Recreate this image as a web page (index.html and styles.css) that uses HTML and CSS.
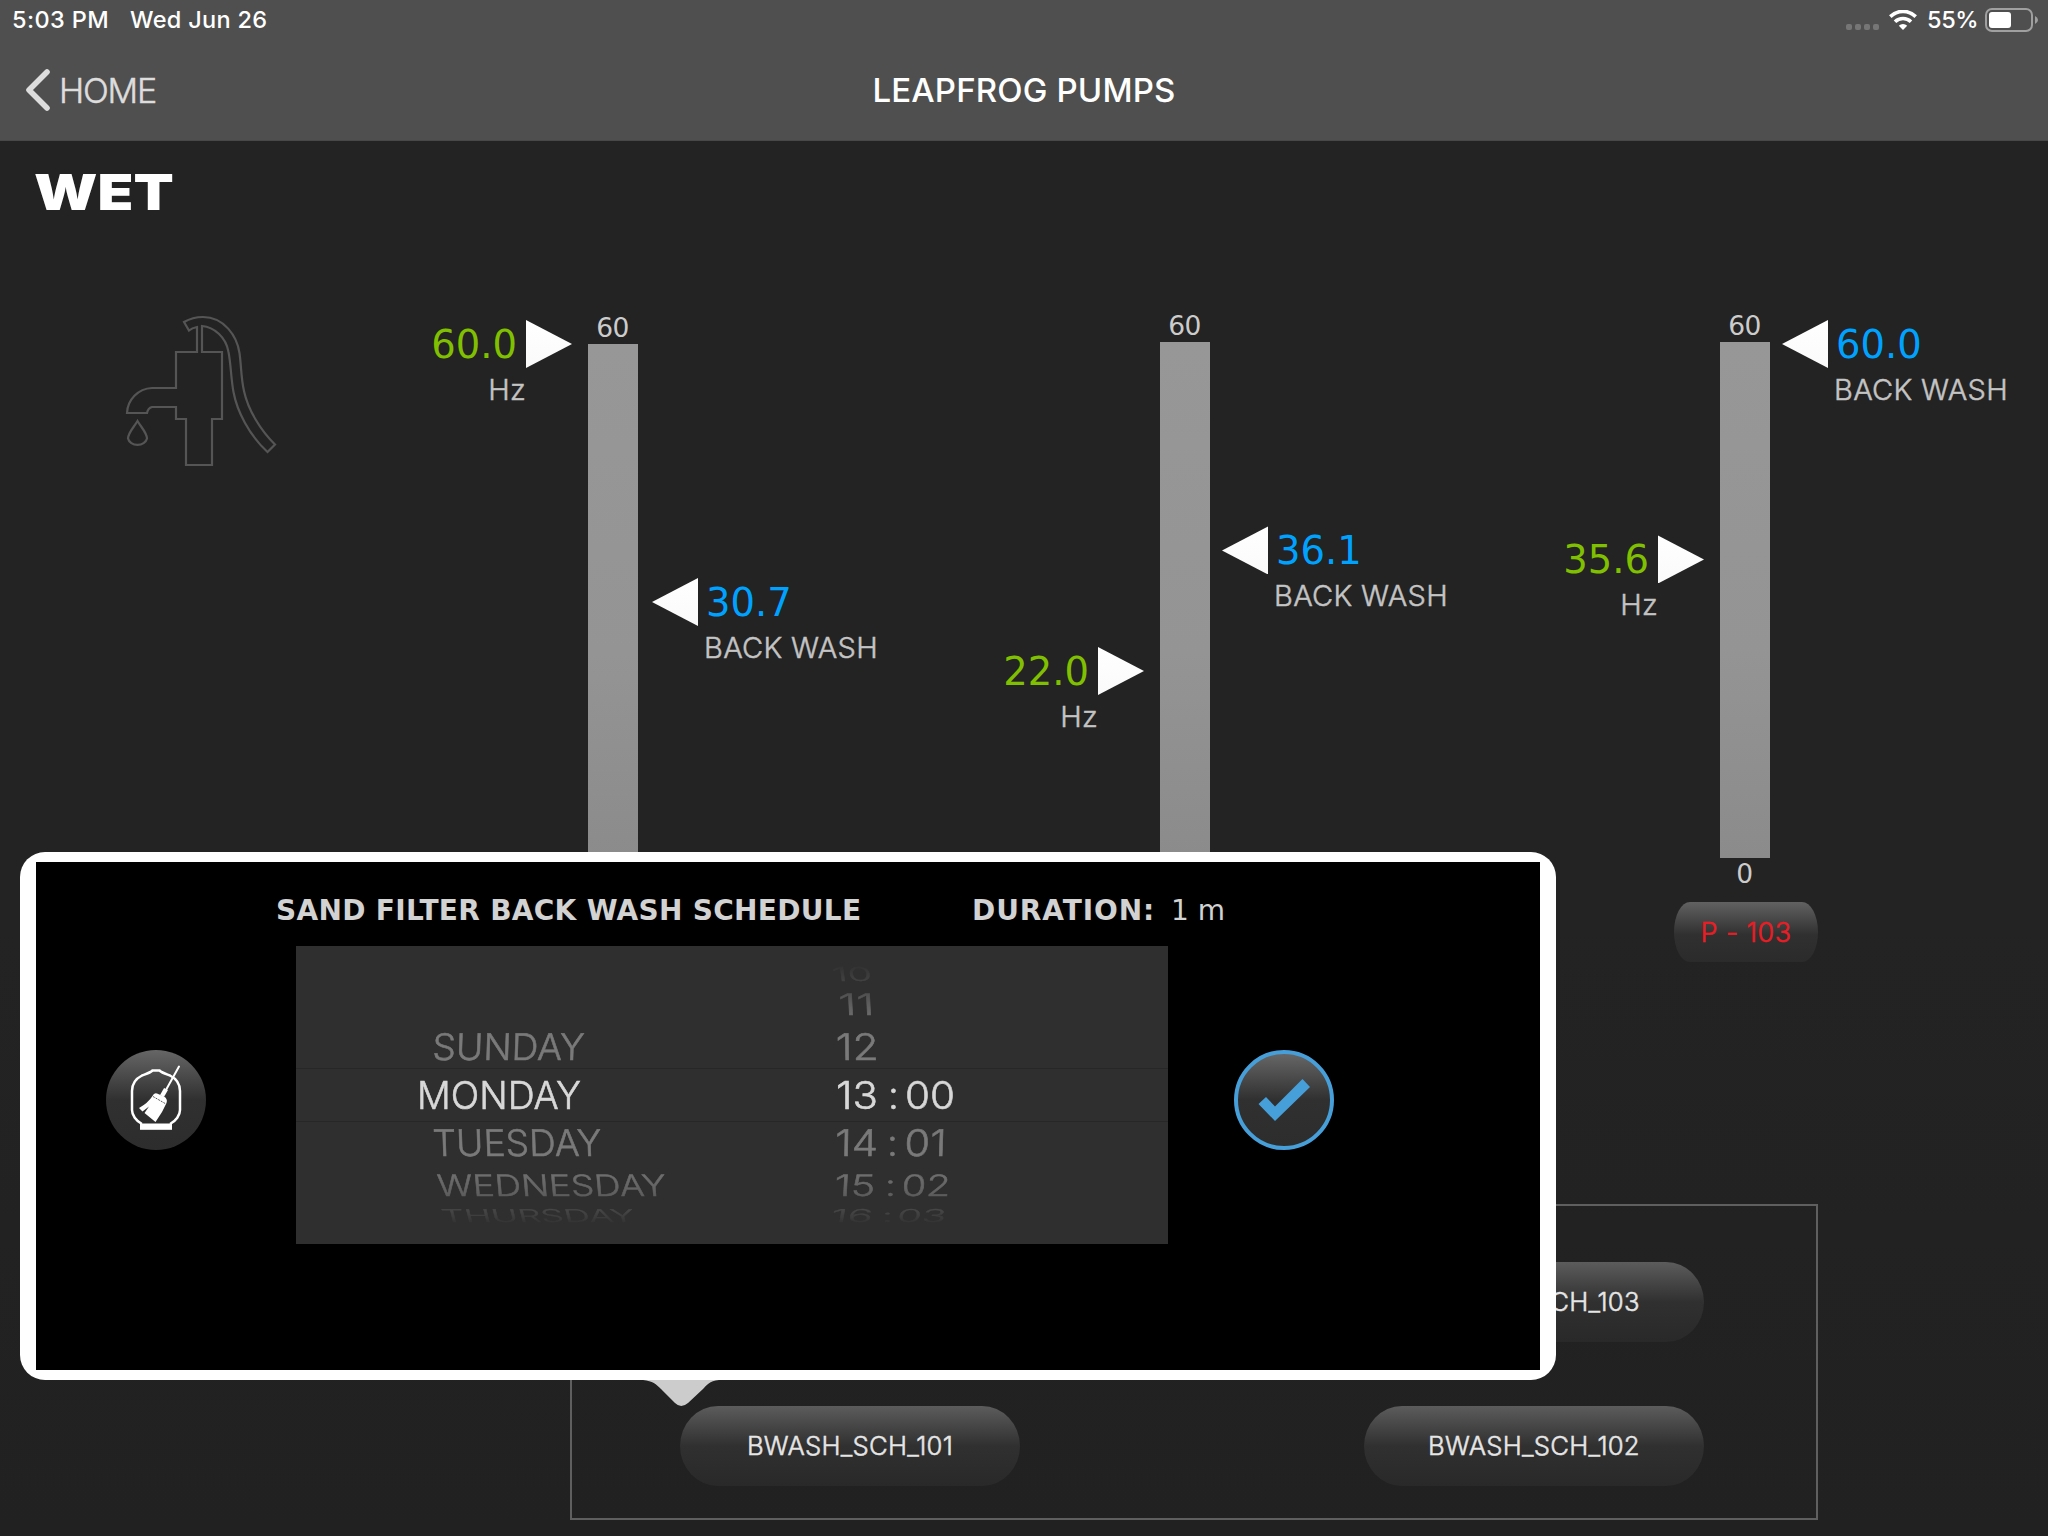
FILE: index.html
```
<!DOCTYPE html>
<html lang="en">
<head>
<meta charset="utf-8">
<title>Leapfrog Pumps</title>
<link rel="stylesheet" href="styles.css">
</head>
<body>
<div class="screen">
  <header class="topbar">
    <div class="status">
      <span class="status-time">5:03 PM</span>
      <span class="status-date">Wed Jun 26</span>
      <div class="status-right">
        <span class="signal"><i></i><i></i><i></i><i></i></span>
        <svg class="wifi" viewBox="0 0 28 20" width="28" height="20">
          <g fill="none" stroke="#fff" stroke-width="3.6">
            <path d="M1.3 6.6A18 18 0 0 1 26.700 6.600"/>
            <path d="M6 11.700A11.500 11.500 0 0 1 22 11.700"/>
          </g>
          <path d="M14 20L9.800 15.800A6 6 0 0 1 18.200 15.800Z" fill="#fff"/>
        </svg>
        <span class="percent">55%</span>
        <svg class="battery" viewBox="0 0 54 24" width="54" height="24">
          <rect x="1" y="1" width="46" height="22" rx="6" fill="none" stroke="#a0a0a0" stroke-width="2"/>
          <rect x="4" y="4" width="22" height="16" rx="3" fill="#fff"/>
          <path d="M50 8Q53 9.500 53 12T50 16Z" fill="#a0a0a0"/>
        </svg>
      </div>
    </div>
    <nav class="nav">
      <a class="back">
        <svg viewBox="0 0 26 44" width="26" height="44"><path d="M22 4L4 22L22 40" fill="none" stroke="#ddd" stroke-width="5.600" stroke-linecap="round" stroke-linejoin="round"/></svg>
        <span>HOME</span>
      </a>
      <h1 class="title">LEAPFROG PUMPS</h1>
    </nav>
  </header>

  <main class="main">
    <div class="brand"><span>WET</span></div>

    <section class="pumps">
      <svg class="faucet" viewBox="0 0 200 200" width="200" height="200">
        <g fill="none" stroke="#555" stroke-width="2.200">
          <path d="M84 32C90 28.500 97 27 103 27C124 27 137 46 139.500 63C141.500 78 141 88 144 101C148 120 161 141 175 154.500L167.500 162C149 145 137 121 133.500 102C131 89 131 75 128.500 62C126 47 114 37 102 36V62H122V129H112V175H86V129H76V117H52Q48 118 47 123H27C27.500 110 38 98.500 52 98H76V62H97V37Q92 38 89 40.500Z"/>
          <path d="M37.500 131C34 137 28 143 28 148.500A9.700 8 0 0 0 47 148.500C47 143 41 137 37.500 131Z"/>
        </g>
      </svg>

      <div class="gauge gauge-first">
        <span class="scale">60</span>
        <div class="bar">
          <div class="marker marker-left" style="top:0%"><div class="line"><span class="value">60.0</span><i class="arrow"></i></div><span class="unit">Hz</span></div>
          <div class="marker marker-right" style="top:50%"><div class="line"><i class="arrow"></i><span class="value">30.7</span></div><span class="unit">BACK WASH</span></div>
        </div>
      </div>
      <div class="gauge">
        <span class="scale">60</span>
        <div class="bar">
          <div class="marker marker-left" style="top:63.760%"><div class="line"><span class="value">22.0</span><i class="arrow"></i></div><span class="unit">Hz</span></div>
          <div class="marker marker-right" style="top:40.400%"><div class="line"><i class="arrow"></i><span class="value">36.1</span></div><span class="unit">BACK WASH</span></div>
        </div>
      </div>
      <div class="gauge">
        <span class="scale">60</span>
        <div class="bar">
          <div class="marker marker-left" style="top:42.150%"><div class="line"><span class="value">35.6</span><i class="arrow"></i></div><span class="unit">Hz</span></div>
          <div class="marker marker-right" style="top:0.390%"><div class="line"><i class="arrow"></i><span class="value">60.0</span></div><span class="unit">BACK WASH</span></div>
        </div>
        <span class="scale scale-low">0</span>
        <button class="pump">P - 103</button>
      </div>
    </section>

    <section class="schedules">
      <button class="pill pill-103">BWASH_SCH_103</button>
      <button class="pill pill-101">BWASH_SCH_101</button>
      <button class="pill pill-102">BWASH_SCH_102</button>
    </section>
  </main>

  <div class="popover">
    <div class="panel">
      <button class="round">
        <svg viewBox="0 0 100 100" width="100" height="100">
          <path d="M36 74C30 71 26 65 26 60V41C26 32 31 28 36 25.500C40 24 44 23 46.500 20.500H53.500C56 23 60 24 64 25.500C69 28 74 32 74 41V60C74 65 70 71 64 74" fill="none" stroke="#fff" stroke-width="2.500"/>
          <rect x="34" y="73.500" width="32" height="6.300" fill="#fff"/>
          <path d="M73 16.500L60.500 39" stroke="#fff" stroke-width="2" stroke-linecap="round"/>
          <path d="M60 39L56 46" stroke="#fff" stroke-width="4.500"/>
          <path d="M46.500 46Q48 42.500 51 43.500L58 46.500Q62 49 60.500 53L56 62L49.500 72L38.500 63L43 56.500L36.500 61.500L33 58Q42 53 46.500 46Z" fill="#fff"/>
          <path d="M47 46.500L60 54" stroke="#333" stroke-width=".8" stroke-dasharray="2 1"/>
        </svg>
      </button>
      <div class="schedule">
        <div class="heading">
          <h2 class="heading-title">SAND FILTER BACK WASH SCHEDULE</h2>
          <span class="heading-duration">DURATION:</span>
          <span class="heading-value">1 m</span>
        </div>
        <svg class="picker" viewBox="296 946 872 298" width="872" height="298">
          <defs>
            <mask id="wheel" maskUnits="userSpaceOnUse" x="296" y="946" width="872" height="298"><rect x="296" y="946" width="872" height="298" fill="url(#fade)"/></mask>
            <linearGradient id="fade" gradientUnits="userSpaceOnUse" x1="0" y1="946" x2="0" y2="1244">
              <stop offset=".06" stop-color="#fff" stop-opacity=".02"/>
              <stop offset=".13" stop-color="#fff" stop-opacity=".3"/>
              <stop offset=".22" stop-color="#fff" stop-opacity=".75"/>
              <stop offset=".3" stop-color="#fff"/>
              <stop offset=".72" stop-color="#fff"/>
              <stop offset=".83" stop-color="#fff" stop-opacity=".65"/>
              <stop offset=".88" stop-color="#fff" stop-opacity=".35"/>
              <stop offset=".935" stop-color="#fff" stop-opacity=".03"/>
            </linearGradient>
          </defs>
          <path class="rule" d="M296 1068.500H1168M296 1121.500H1168"/>
          <g class="wheel" mask="url(#wheel)">
            <text transform="translate(432 1060) skewX(-2) scale(1 .95)" textLength="152" lengthAdjust="spacingAndGlyphs">SUNDAY</text>
            <text transform="translate(433 1156) skewX(2) scale(1 .95)" textLength="169" lengthAdjust="spacingAndGlyphs">TUESDAY</text>
            <text transform="translate(438 1196) skewX(5) scale(1 .77)" textLength="229" lengthAdjust="spacingAndGlyphs">WEDNESDAY</text>
            <text transform="translate(443 1222) skewX(14) scale(1 .46)" textLength="193" lengthAdjust="spacingAndGlyphs">THURSDAY</text>

            <text transform="translate(833 981) skewX(8) scale(1 .5)" textLength="40" lengthAdjust="spacingAndGlyphs">10</text>
            <text transform="translate(839 1015) skewX(3) scale(1 .77)" textLength="36" lengthAdjust="spacingAndGlyphs">11</text>
            <text transform="translate(836 1060) skewX(1) scale(1 .95)" textLength="43" lengthAdjust="spacingAndGlyphs">12</text>
            <text transform="translate(835 1156) skewX(-1) scale(1 .95)" textLength="43" lengthAdjust="spacingAndGlyphs">14</text>
            <text transform="translate(834 1196) skewX(-3) scale(1 .77)" textLength="41" lengthAdjust="spacingAndGlyphs">15</text>
            <text transform="translate(830 1222) skewX(-10) scale(1 .46)" textLength="42" lengthAdjust="spacingAndGlyphs">16</text>
            <text transform="translate(887 1156) scale(1 .95)">:</text>
            <text transform="translate(885 1196) scale(1 .77)">:</text>
            <text transform="translate(882 1222) scale(1 .46)">:</text>
            <text transform="translate(904 1156) skewX(-2) scale(1 .95)" textLength="42" lengthAdjust="spacingAndGlyphs">01</text>
            <text transform="translate(901 1196) skewX(-4) scale(1 .77)" textLength="49" lengthAdjust="spacingAndGlyphs">02</text>
            <text transform="translate(896 1222) skewX(-12) scale(1 .46)" textLength="49" lengthAdjust="spacingAndGlyphs">03</text>
          </g>
          <g class="chosen">
            <text x="417" y="1109" textLength="164" lengthAdjust="spacingAndGlyphs">MONDAY</text>
            <text x="836" y="1109" textLength="42" lengthAdjust="spacingAndGlyphs">13</text>
            <text x="888" y="1109">:</text>
            <text x="905" y="1109" textLength="50" lengthAdjust="spacingAndGlyphs">00</text>
          </g>
        </svg>
      </div>
      <button class="round round-check">
        <svg viewBox="0 0 100 100" width="100" height="100"><path d="M24.500 54L32 47L41 56.500L68.500 29L76 37L41 71Z" fill="#479fd9"/></svg>
      </button>
    </div>
    <svg class="tail" viewBox="0 0 76 26" width="76" height="26"><path d="M0 0H76C66 1 64 5 60 9L45 23Q38 29 32 23L18 9C13 4 10 1 0 0Z" fill="#ccc"/></svg>
  </div>
</div>
</body>
</html>
```
FILE: styles.css
```
* { box-sizing: border-box; }
body { margin: 0; background: #222; }
button { border: 0; padding: 0; margin: 0; color: inherit; font: inherit; }
h1, h2 { margin: 0; }
svg { display: block; flex: none; }

.screen {
  position: relative;
  display: flex;
  flex-direction: column;
  width: 2048px;
  height: 1536px;
  overflow: hidden;
  background: linear-gradient(#232323 60%, #212121);
  font-family: Inter, "Liberation Sans", sans-serif;
  color: #e6e6e6;
}

/* Light text is thickened slightly to sit between the light and regular weights */
.back, .unit, .pump, .pill { font-weight: 300; -webkit-text-stroke: .5px currentColor; }

.topbar { height: 141px; background: #4f4f4f; border-bottom: 1px solid #484848; }
.status { display: flex; align-items: center; height: 40px; padding: 0 11px 0 12px; color: #fff; font-size: 23.500px; font-weight: 500; line-height: 40px; }
.status-time { width: 118px; letter-spacing: .4px; }
.status-date { letter-spacing: .3px; }
.status-right { display: flex; align-items: center; margin-left: auto; }
.signal { display: flex; gap: 3px; margin: 14px 10px 0 0; }
.signal i { width: 6px; height: 6px; border-radius: 2px; background: #767676; }
.wifi { margin-right: 10px; }
.percent { width: 58px; letter-spacing: -.4px; }
.battery { margin-right: -2px; }

.nav { display: grid; grid-template-columns: 1fr auto 1fr; align-items: center; height: 100px; padding: 0 25px; }
.back { display: flex; align-items: center; gap: 8px; color: #ddd; font-size: 34px; letter-spacing: -1.200px; }
.title { color: #fff; font-size: 33px; font-weight: 500; line-height: 40px; letter-spacing: .15px; }

.main { display: flex; flex-direction: column; flex: 1; }
.brand { height: 161px; padding: 21px 0 0 34px; color: #fff; font-size: 49.500px; font-weight: 900; line-height: 60px; }
.brand span { display: inline-block; transform: scaleX(1.185); transform-origin: left; }

.pumps { display: flex; height: 902px; padding-left: 100px; }
.faucet { margin: -12px 288px 0 0; }
.gauge { display: flex; flex: none; flex-direction: column; align-items: center; width: 50px; margin-right: 510px; }
.gauge-first { margin-right: 522px; padding-top: 2px; }
.scale { height: 40px; margin-right: 1px; color: #ccc; font-family: "DejaVu Sans", sans-serif; font-size: 26.500px; line-height: 48px; letter-spacing: -.5px; }
.bar { position: relative; flex: none; width: 50px; height: 516px; background: linear-gradient(#979797, #949494 60%, #8b8b8b); }
.scale-low { height: 44px; line-height: 32px; }
.marker { position: absolute; display: flex; flex-direction: column; margin-top: -24px; }
.marker-left { right: 66px; align-items: flex-end; }
.marker-right { left: 62px; align-items: flex-start; }
.gauge-first .marker-right { left: 64px; }
.line { display: flex; align-items: center; height: 48px; }
.arrow { width: 46px; height: 48px; background: linear-gradient(#fff, #fafafa); }
.marker-left .arrow { clip-path: polygon(0 0, 100% 50%, 0 100%); margin-left: 9px; }
.marker-right .arrow { clip-path: polygon(100% 0, 100% 100%, 0 50%); margin-right: 8px; }
.value { font-family: "DejaVu Sans", sans-serif; font-size: 38.500px; line-height: 48px; padding-top: 1px; }
.marker-left .value { color: #80c000; }
.marker-right .value { color: #00a2ff; }
.unit { color: #c4c4c4; font-size: 29px; line-height: 44px; letter-spacing: .3px; white-space: nowrap; }
.marker-left .unit { margin-right: 46px; }
.marker-right .unit { margin-left: 52px; }
.pump { position: relative; left: 1px; flex: none; width: 144px; height: 60px; border-radius: 16px / 30px; background: linear-gradient(#616161, #303030 55%, #2b2b2b); color: #ed1c24; font-size: 27px; letter-spacing: .4px; }

.schedules {
  display: grid;
  grid-template-columns: 340px 340px;
  grid-template-rows: 80px 80px;
  gap: 64px 344px;
  width: 1248px;
  height: 316px;
  margin-left: 570px;
  padding: 56px 0 0 108px;
  border: 2px solid #5f5f5f;
}
.pill { padding-bottom: 2px; border-radius: 38px / 40px; background: linear-gradient(#5c5c5c, #303030 50%, #292929); color: #e6e6e6; font-size: 25.700px; letter-spacing: .25px; }
.pill-103 { grid-area: 1 / 2; }
.pill-101 { grid-area: 2 / 1; }
.pill-102 { grid-area: 2 / 2; }

.popover { position: absolute; left: 20px; top: 852px; width: 1536px; height: 528px; padding: 10px 16px; border-radius: 25px; background: #fff; }
.panel { display: flex; height: 508px; padding-left: 70px; background: #000; }
.tail { position: absolute; left: 623px; top: 528px; }
.round { flex: none; width: 100px; height: 100px; margin-top: 188px; border-radius: 50%; background: linear-gradient(#666, #303030 50%, #2d2d2d); }
.round-check { border: 4px solid #479fd9; }
.round-check svg { margin: -4px; }
.schedule { width: 872px; margin: 0 66px 0 90px; }
.heading { display: flex; align-items: center; height: 84px; margin-left: -20px; padding-top: 14px; color: #d2d2d2; font-family: "DejaVu Sans", sans-serif; line-height: 36px; white-space: nowrap; }
.heading-title { flex: none; width: 696px; font-size: 28px; font-weight: 700; letter-spacing: .3px; }
.heading-duration { flex: none; width: 199px; font-size: 28px; font-weight: 700; letter-spacing: .9px; }
.heading-value { font-size: 28px; }
.picker { background: #2f2f2f; font-size: 38.500px; font-weight: 300; }
.rule { stroke: #272727; stroke-width: 1; }
.wheel { fill: #7a7a7a; stroke: #7a7a7a; stroke-width: .6px; }
.chosen { fill: #d8d8d8; stroke: #d8d8d8; stroke-width: .6px; }
```
